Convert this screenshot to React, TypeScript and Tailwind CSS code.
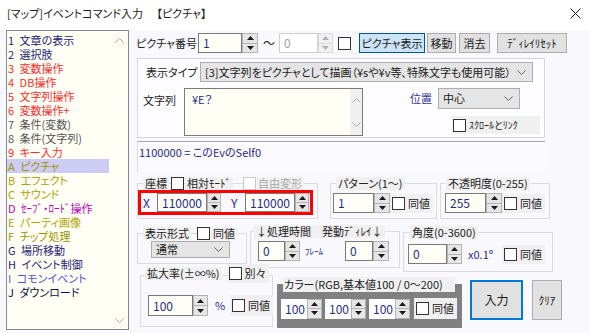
import type { ReactNode } from "react";

const FONT =
  "font-['Noto_Sans_CJK_JP',sans-serif] [font-feature-settings:'palt']";

const LIST_ITEMS: { k: string; label: string; color: string; sel?: boolean }[] = [
  { k: "1", label: "文章の表示", color: "text-[#1c1c78]" },
  { k: "2", label: "選択肢", color: "text-[#1c1c78]" },
  { k: "3", label: "変数操作", color: "text-[#ff2a2a]" },
  { k: "4", label: "DB操作", color: "text-[#ff2a2a]" },
  { k: "5", label: "文字列操作", color: "text-[#ff2a2a]" },
  { k: "6", label: "変数操作+", color: "text-[#ff2a2a]" },
  { k: "7", label: "条件(変数)", color: "text-[#555555]" },
  { k: "8", label: "条件(文字列)", color: "text-[#555555]" },
  { k: "9", label: "キー入力", color: "text-[#ff2a2a]" },
  { k: "A", label: "ピクチャ", color: "text-[#a09400]", sel: true },
  { k: "B", label: "エフェクト", color: "text-[#b0a200]" },
  { k: "C", label: "サウンド", color: "text-[#b0a200]" },
  { k: "D", label: "ｾｰﾌﾞ・ﾛｰﾄﾞ操作", color: "text-[#c000c0]" },
  { k: "E", label: "パーティ画像", color: "text-[#b0a200]" },
  { k: "F", label: "チップ処理", color: "text-[#989400]" },
  { k: "G", label: "場所移動", color: "text-[#1c1c78]" },
  { k: "H", label: "イベント制御", color: "text-[#1c1c78]" },
  { k: "I", label: "コモンイベント", color: "text-[#5050e0]" },
  { k: "J", label: "ダウンロード", color: "text-[#101040]" },
];

function Tri({ up, dim }: { up?: boolean; dim?: boolean }) {
  return (
    <svg width="7" height="4" viewBox="0 0 7 4">
      <path
        d={up ? "M0 4 L3.5 0 L7 4 Z" : "M0 0 L3.5 4 L7 0 Z"}
        fill={dim ? "#b0b0b0" : "#1a1a1a"}
      />
    </svg>
  );
}

function Chev({ up, color = "#a8a8a8" }: { up?: boolean; color?: string }) {
  return (
    <svg width="9" height="5" viewBox="0 0 9 5">
      <path
        d={up ? "M0.5 4.5 L4.5 0.5 L8.5 4.5" : "M0.5 0.5 L4.5 4.5 L8.5 0.5"}
        fill="none"
        stroke={color}
        strokeWidth="1"
      />
    </svg>
  );
}

function Spin({
  value,
  iw,
  sw = "w-[15px]",
  h = "h-[20px]",
  disabled = false,
  bare = false,
}: {
  value: string;
  iw: string;
  sw?: string;
  h?: string;
  disabled?: boolean;
  bare?: boolean;
}) {
  const box = disabled
    ? "border border-[#cfcfcf] bg-white text-[#a0a0a0]"
    : bare
      ? "bg-white text-[#1e2a8a]"
      : "border border-[#7a7a7a] bg-[#fffff8] text-[#1e2a8a]";
  return (
    <div className={`flex shrink-0 ${h}`}>
      <div
        className={`${iw} h-full flex items-center pl-[4px] text-[12px] leading-none ${box}`}
      >
        {value}
      </div>
      <div
        className={`${sw} h-full flex flex-col border ${disabled ? "border-[#dcdcdc] bg-[#f0f0f0]" : "border-[#b4b4b4] bg-[#e6e6e6]"}`}
      >
        <div
          className={`flex-1 flex items-center justify-center border-b ${disabled ? "border-[#dcdcdc]" : "border-[#b4b4b4]"}`}
        >
          <Tri up dim={disabled} />
        </div>
        <div className="flex-1 flex items-center justify-center">
          <Tri dim={disabled} />
        </div>
      </div>
    </div>
  );
}

function Check({ disabled }: { disabled?: boolean }) {
  return (
    <div
      className={`w-[13px] h-[13px] shrink-0 border bg-white ${disabled ? "border-[#c8c8c8]" : "border-[#333333]"}`}
    />
  );
}

function Same({ text = "同値", h = "h-[19px]" }: { text?: string; h?: string }) {
  return (
    <div
      className={`flex items-center bg-[#f0f0f0] pl-[2px] pr-[3px] shrink-0 whitespace-nowrap ${h}`}
    >
      <Check />
      <span className="ml-[3px] text-[11px] leading-none text-[#222222]">
        {text}
      </span>
    </div>
  );
}

function L({ children, className = "" }: { children: ReactNode; className?: string }) {
  return (
    <span
      className={`bg-[#f0f0f0] px-[2px] text-[11px] leading-[13px] text-[#222222] whitespace-nowrap ${className}`}
    >
      {children}
    </span>
  );
}

function Group({
  className,
  label,
  labelPos = "left-[5px] -top-[8px]",
  children,
}: {
  className: string;
  label: ReactNode;
  labelPos?: string;
  children: ReactNode;
}) {
  return (
    <div className={`relative shrink-0 border border-[#dcdcdc] ${className}`}>
      <div className={`absolute flex items-center h-[14px] ${labelPos}`}>
        {label}
      </div>
      {children}
    </div>
  );
}

function Select({ className, children }: { className: string; children: ReactNode }) {
  return (
    <div
      className={`flex items-center justify-between border border-[#adadad] bg-[#e5e5e5] pl-[4px] pr-[6px] overflow-hidden whitespace-nowrap shrink-0 ${className}`}
    >
      <span className="text-[11px] leading-none text-[#1a1a1a]">{children}</span>
      <Chev color="#606060" />
    </div>
  );
}

function Btn({ className, children }: { className: string; children: ReactNode }) {
  return (
    <div
      className={`flex items-center justify-center shrink-0 text-[11px] leading-none text-[#1a1a1a] whitespace-nowrap ${className}`}
    >
      {children}
    </div>
  );
}

function ListBox() {
  return (
    <div className="flex w-[123px] h-[300px] border border-[#828790] bg-[#fffff5] shrink-0">
      <div className="flex-1 pt-[2px]">
        {LIST_ITEMS.map((it) => (
          <div
            key={it.k}
            className={`flex h-[14px] items-center text-[11px] leading-none pl-[1px] whitespace-pre ${it.color} ${it.sel ? "bg-[#ccccf5] w-[102px]" : ""}`}
          >
            {`${it.k}\u2002${it.label}`}
          </div>
        ))}
      </div>
      <div className="w-[18px] flex flex-col justify-between items-center pt-[7px] pb-[6px]">
        <Chev up />
        <Chev />
      </div>
    </div>
  );
}

export default function App() {
  return (
    <div className={`w-[590px] h-[333px] overflow-hidden bg-[#f9f9fd] ${FONT}`}>
      <div className="h-[30px] bg-white flex items-start justify-between pl-[7px] pr-[9px] pt-[5px]">
        <span className="text-[11px] leading-[16px] text-[#1a1a1a] whitespace-pre">
          [マップ]イベントコマンド入力　 【ピクチャ】
        </span>
        <svg width="11" height="11" viewBox="0 0 11 11" className="mt-[3px]">
          <path d="M0.5 0.5 L10.5 10.5 M10.5 0.5 L0.5 10.5" stroke="#1a1a1a" strokeWidth="1" />
        </svg>
      </div>

      <div className="flex pl-[6px]">
        <ListBox />

        <div className="ml-[8px] flex flex-col w-[445px] text-[#222222]">
          {/* picture number row */}
          <div className="mt-[3px] -ml-[1px] flex items-center h-[20px]">
            <span className="w-[62px] text-[11px] leading-none">ピクチャ番号</span>
            <Spin value="1" iw="w-[44px]" sw="w-[16px]" />
            <span className="ml-[5px] w-[12px] text-[12px] leading-none">〜</span>
            <div className="ml-[4px]">
              <Spin value="0" iw="w-[39px]" sw="w-[15px]" disabled />
            </div>
            <div className="ml-[5px]">
              <Check />
            </div>
            <Btn className="ml-[8px] w-[66px] h-[20px] border border-[#005499] bg-[#cce4f7]">
              ピクチャ表示
            </Btn>
            <Btn className="ml-[2px] w-[29px] h-[20px] border border-[#adadad] bg-[#e1e1e1]">
              移動
            </Btn>
            <Btn className="ml-[3px] w-[31px] h-[20px] border border-[#adadad] bg-[#e1e1e1]">
              消去
            </Btn>
            <Btn className="ml-[7px] w-[70px] h-[20px] border border-[#adadad] bg-[#e1e1e1] text-[10px]">
              ﾃﾞｨﾚｲﾘｾｯﾄ
            </Btn>
          </div>

          {/* display type panel */}
          <div className="mt-[5px] w-[408px] h-[80px] border border-[#d6d6de] bg-[#fdfdff] pt-[3px]">
            <div className="flex items-center h-[20px] pl-[8px]">
              <span className="w-[54px] text-[11px] leading-none">表示タイプ</span>
              <Select className="w-[333px] h-[20px]">
                [3]文字列をピクチャとして描画（¥sや¥v等、特殊文字も使用可能）
              </Select>
            </div>
            <div className="mt-[6px] flex">
              <span className="ml-[5px] w-[41px] mt-[5px] text-[11px] leading-[14px]">
                文字列
              </span>
              <div className="w-[179px] h-[48px] flex border border-[#7a7a7a] bg-[#fffff5] shrink-0">
                <div className="flex-1 pl-[7px] pt-[3px] text-[11px] leading-[14px] text-[#1e2a8a]">
                  ¥E？
                </div>
                <div className="w-[12px] bg-[#f0f0f0] flex flex-col justify-between items-center pt-[9px] pb-[8px]">
                  <Chev up />
                  <Chev />
                </div>
              </div>
              <div className="ml-[47px] flex flex-col">
                <div className="flex items-center h-[21px]">
                  <span className="w-[28px] text-[11px] leading-none text-[#3434a0]">位置</span>
                  <Select className="w-[82px] h-[21px]">中心</Select>
                </div>
                <div className="mt-[7px] ml-[42px] flex items-center bg-[#f0f0f0] w-[88px] h-[18px] pl-[1px]">
                  <Check />
                  <span className="ml-[3px] text-[10px] leading-none text-[#222222]">
                    ｽｸﾛｰﾙとﾘﾝｸ
                  </span>
                </div>
              </div>
            </div>
          </div>

          {/* info text */}
          <div className="mt-[3px] w-[408px] h-[31px] border-t border-l border-t-[#a8a8a8] border-l-[#e0e0e0] bg-[#fbfbff] pl-[1px] pt-[2px] text-[11px] leading-[16px] text-[#1e2a8a]">
            1100000 = このEvのSelf0
          </div>

          {/* row: position / pattern / opacity */}
          <div className="mt-[4px] flex items-start h-[45px]">
            <Group
              className="mt-[7px] w-[181px] h-[36px]"
              label={
                <>
                  <L>座標</L>
                  <div className="ml-[2px]">
                    <Check />
                  </div>
                  <L className="ml-[1px]">相対ﾓｰﾄﾞ</L>
                  <div className="ml-[10px]">
                    <Check disabled />
                  </div>
                  <L className="text-[#a8a8a8]">自由変形</L>
                </>
              }
            >
              <div className="mt-[6px] w-[175px] h-[25px] border-[3px] border-[#ff0000] flex items-center pl-[2px]">
                <span className="w-[14px] text-[12px] leading-none text-[#1e2a8a]">X</span>
                <Spin value="110000" iw="w-[50px]" sw="w-[14px]" h="h-[19px]" />
                <span className="ml-[10px] w-[14px] text-[12px] leading-none text-[#1e2a8a]">Y</span>
                <Spin value="110000" iw="w-[50px]" sw="w-[14px]" h="h-[19px]" />
              </div>
            </Group>

            <Group
              className="ml-[12px] mt-[7px] w-[107px] h-[36px]"
              label={<L>パターン(1〜)</L>}
            >
              <div className="mt-[9px] ml-[2px] flex items-center">
                <Spin value="1" iw="w-[41px]" sw="w-[16px]" />
                <Same />
              </div>
            </Group>

            <Group
              className="ml-[3px] mt-[7px] w-[110px] h-[36px]"
              label={<L>不透明度(0-255)</L>}
            >
              <div className="mt-[9px] ml-[4px] flex items-center">
                <Spin value="255" iw="w-[41px]" sw="w-[16px]" />
                <Same />
              </div>
            </Group>
          </div>

          {/* row: display mode / timing / angle */}
          <div className="flex items-start h-[52px]">
            <Group
              className="mt-[12px] w-[110px] h-[31px]"
              label={
                <>
                  <L>表示形式</L>
                  <div className="ml-[6px]">
                    <Check />
                  </div>
                  <L className="ml-[1px]">同値</L>
                </>
              }
            >
              <div className="mt-[7px] ml-[13px]">
                <Select className="w-[79px] h-[17px]">通常</Select>
              </div>
            </Group>

            <Group
              className="ml-[3px] mt-[10px] w-[150px] h-[37px]"
              labelPos="left-[3px] -top-[8px]"
              label={<L>↓処理時間　発動ﾃﾞｨﾚｲ↓</L>}
            >
              <div className="mt-[9px] ml-[7px] flex items-center">
                <Spin value="0" iw="w-[27px]" sw="w-[15px]" />
                <span className="ml-[5px] w-[20px] text-[9px] leading-none text-[#1e2a8a]">ﾌﾚｰﾑ</span>
                <div className="ml-[20px]">
                  <Spin value="0" iw="w-[28px]" sw="w-[16px]" />
                </div>
              </div>
            </Group>

            <Group
              className="ml-[3px] mt-[11px] w-[150px] h-[40px]"
              labelPos="left-[6px] -top-[8px]"
              label={<L>角度(0-3600)</L>}
            >
              <div className="mt-[11px] ml-[4px] flex items-center">
                <Spin value="0" iw="w-[39px]" sw="w-[15px]" />
                <span className="ml-[6px] w-[34px] text-[11px] leading-none text-[#1e2a8a]">x0.1º</span>
                <Same />
              </div>
            </Group>
          </div>

          {/* row: scale / color / buttons */}
          <div className="flex items-start h-[60px]">
            <Group
              className="ml-[3px] mt-[2px] w-[133px] h-[52px]"
              labelPos="left-[4px] -top-[12px] h-[19px]"
              label={
                <>
                  <L>拡大率(±∞%)</L>
                  <div className="ml-[5px]">
                    <Same text="別々" />
                  </div>
                </>
              }
            >
              <div className="mt-[19px] ml-[7px] flex items-center">
                <Spin value="100" iw="w-[45px]" sw="w-[15px]" h="h-[21px]" />
                <span className="ml-[7px] w-[10px] text-[11px] leading-none text-[#1e2a8a]">%</span>
                <div className="ml-[5px]">
                  <Same h="h-[21px]" />
                </div>
              </div>
            </Group>

            <div className="relative ml-[4px] mt-[11px] w-[185px] h-[44px] bg-[#808080] shrink-0">
              <div className="absolute left-[6px] -top-[7px] w-[172px] h-[15px] bg-[#f0f0f0] flex items-center pl-[1px]">
                <span className="text-[11px] leading-none text-[#222222] whitespace-nowrap">
                  カラー(RGB,基本値100 / 0〜200)
                </span>
              </div>
              <div className="mt-[14px] ml-[4px] flex items-center gap-[3px]">
                <Spin value="100" iw="w-[26px]" sw="w-[15px]" bare />
                <Spin value="100" iw="w-[26px]" sw="w-[15px]" bare />
                <Spin value="100" iw="w-[26px]" sw="w-[15px]" bare />
                <div className="ml-[1px]">
                  <Same h="h-[21px]" />
                </div>
              </div>
            </div>

            <Btn className="ml-[8px] mt-[7px] w-[53px] h-[40px] border-2 border-[#0078d7] bg-[#e1e1e1] text-[12px]">
              入力
            </Btn>
            <Btn className="ml-[9px] mt-[7px] w-[30px] h-[40px] border border-[#adadad] bg-[#e1e1e1] text-[10px]">
              ｸﾘｱ
            </Btn>
          </div>
        </div>
      </div>
    </div>
  );
}
